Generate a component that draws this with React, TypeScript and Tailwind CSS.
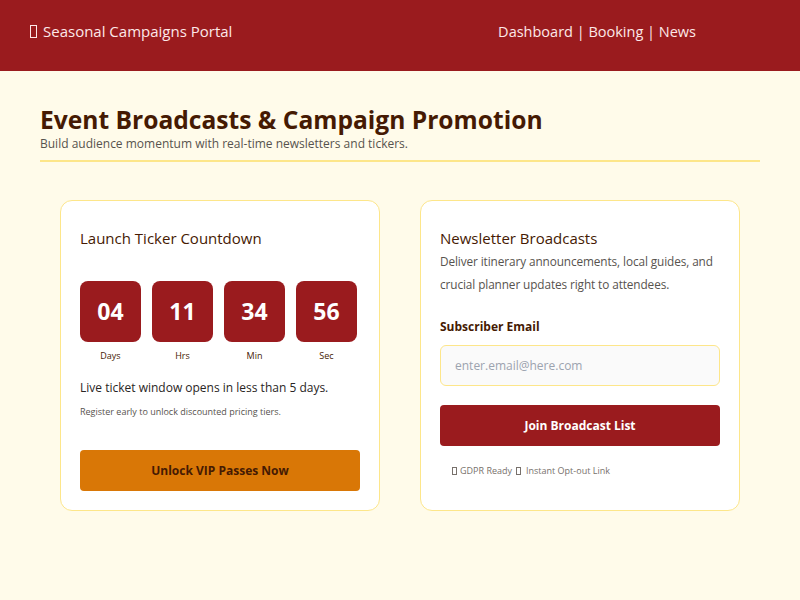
import React from 'react';

const font = { fontFamily: '"Open Sans", "Noto Sans", "Liberation Sans", sans-serif' };

const ticks = [
  { value: '04', label: 'Days' },
  { value: '11', label: 'Hrs' },
  { value: '34', label: 'Min' },
  { value: '56', label: 'Sec' },
];

// missing-glyph box, as the emoji show in the reference
function Tofu({ small }: { small?: boolean }) {
  return (
    <span
      className={
        small
          ? 'inline-block align-[-1px] w-[5px] h-[8px] border border-current mr-[3px]'
          : 'inline-block align-[-2px] w-[7px] h-[13px] border border-current mr-[6px]'
      }
    />
  );
}

export default function App() {
  return (
    <div className="min-h-[600px] bg-[#fffbea]" style={font}>
      <header className="h-[71px] bg-[#9a1b1e] flex items-center justify-between pl-[30px] pr-[104px] pb-[8px] text-[15px] text-[#fde8e8]">
        <div className="flex items-center"><Tofu />Seasonal Campaigns Portal</div>
        <nav className="text-[14.5px]">Dashboard | Booking | News</nav>
      </header>

      <main className="px-[40px] pt-[33px]">
        <div className="border-b-2 border-[#fde68a] pb-[8px]">
          <h1 className="text-[24.6px] font-bold leading-[32px] text-[#451a03]">Event Broadcasts &amp; Campaign Promotion</h1>
          <p className="text-[12px] leading-[16px] text-[#57534e]">Build audience momentum with real-time newsletters and tickers.</p>
        </div>

        <div className="grid grid-cols-2 gap-[40px] px-[20px] pt-[38px]">
          <section className="h-[311px] rounded-[12px] border border-[#fde68a] bg-white px-[19px] pt-[26px]">
            <h2 className="text-[15px] leading-[22px] text-[#451a03]">Launch Ticker Countdown</h2>
            <div className="mt-[32px] flex gap-[11px]">
              {ticks.map(t => (
                <div key={t.label} className="w-[61px] flex flex-col items-center">
                  <div className="w-[61px] h-[61px] rounded-[8px] bg-[#9a1b1e] flex items-center justify-center text-[23px] font-bold text-white">
                    {t.value}
                  </div>
                  <div className="mt-[7px] text-[9px] leading-[14px] text-[#451a03]">{t.label}</div>
                </div>
              ))}
            </div>
            <p className="mt-[16px] text-[12px] leading-[18px] text-[#292524]">Live ticket window opens in less than 5 days.</p>
            <p className="mt-[8px] text-[9px] leading-[14px] text-[#57534e]">Register early to unlock discounted pricing tiers.</p>
            <button className="mt-[31px] w-full h-[41px] rounded-[4px] bg-[#d97706] text-[12px] font-bold text-[#451a03]">
              Unlock VIP Passes Now
            </button>
          </section>

          <section className="h-[311px] rounded-[12px] border border-[#fde68a] bg-white px-[19px] pt-[26px]">
            <h2 className="text-[15px] leading-[22px] text-[#451a03]">Newsletter Broadcasts</h2>
            <p className="mt-[1px] text-[11.8px] leading-[23px] text-[#57534e] tracking-[-0.1px]">
              Deliver itinerary announcements, local guides, and crucial planner updates right to attendees.
            </p>
            <label className="mt-[22px] block text-[12px] font-bold leading-[18px] text-[#451a03]">Subscriber Email</label>
            <input
              placeholder="enter.email@here.com"
              className="mt-[9px] w-full h-[41px] rounded-[6px] border border-[#fde68a] bg-[#fafafa] px-[14px] text-[12px] placeholder-[#9ca3af] outline-none"
            />
            <button className="mt-[19px] w-full h-[41px] rounded-[4px] bg-[#9a1b1e] text-[12px] font-bold text-white">
              Join Broadcast List
            </button>
            <p className="mt-[18px] px-[12px] text-[9px] leading-[14px] text-[#78716c] flex items-center">
              <Tofu small />GDPR Ready <span className="w-[4px]" /><Tofu small /><span className="w-[2px]" />Instant Opt-out Link
            </p>
          </section>
        </div>
      </main>
    </div>
  );
}
